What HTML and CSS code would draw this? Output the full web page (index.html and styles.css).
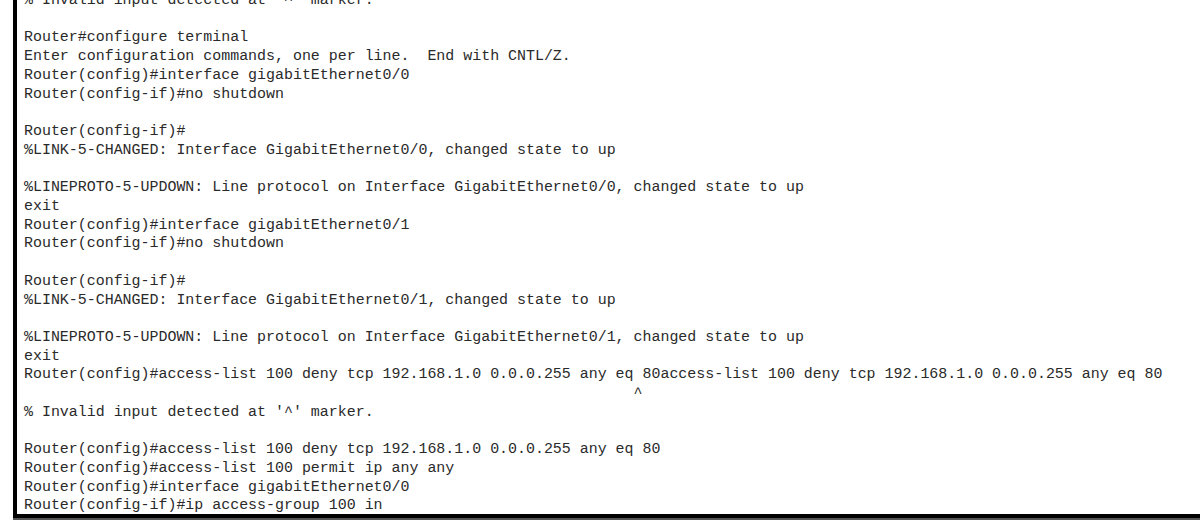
FILE: index.html
```html
<!DOCTYPE html>
<html>
<head>
<meta charset="utf-8">
<link rel="stylesheet" href="styles.css">
</head>
<body>
<div class="terminal">
<pre class="output">% Invalid input detected at '^' marker.

Router#configure terminal
Enter configuration commands, one per line.  End with CNTL/Z.
Router(config)#interface gigabitEthernet0/0
Router(config-if)#no shutdown

Router(config-if)#
%LINK-5-CHANGED: Interface GigabitEthernet0/0, changed state to up

%LINEPROTO-5-UPDOWN: Line protocol on Interface GigabitEthernet0/0, changed state to up
exit
Router(config)#interface gigabitEthernet0/1
Router(config-if)#no shutdown

Router(config-if)#
%LINK-5-CHANGED: Interface GigabitEthernet0/1, changed state to up

%LINEPROTO-5-UPDOWN: Line protocol on Interface GigabitEthernet0/1, changed state to up
exit
Router(config)#access-list 100 deny tcp 192.168.1.0 0.0.0.255 any eq 80access-list 100 deny tcp 192.168.1.0 0.0.0.255 any eq 80
                                                                    ^
% Invalid input detected at '^' marker.

Router(config)#access-list 100 deny tcp 192.168.1.0 0.0.0.255 any eq 80
Router(config)#access-list 100 permit ip any any
Router(config)#interface gigabitEthernet0/0
Router(config-if)#ip access-group 100 in</pre>
</div>
</body>
</html>
```
FILE: styles.css
```css
html, body {
  margin: 0;
  padding: 0;
  background: #ffffff;
}

body {
  height: 530px;
  overflow: hidden;
}

.terminal {
  box-sizing: border-box;
  height: 527px;
  margin: -9px 0 0 13px;
  border-left: 4px solid #000000;
  border-bottom: 4px solid #000000;
  box-shadow: 0 2px 0 #555555;
  padding: 0 0 0 7px;
  background: #ffffff;
  overflow: hidden;
}

.output {
  margin: 0;
  font-family: "Liberation Mono", "Courier New", monospace;
  font-size: 14.95px;
  line-height: 18.72px;
  color: #2a2a2a;
  white-space: pre;
}
```
